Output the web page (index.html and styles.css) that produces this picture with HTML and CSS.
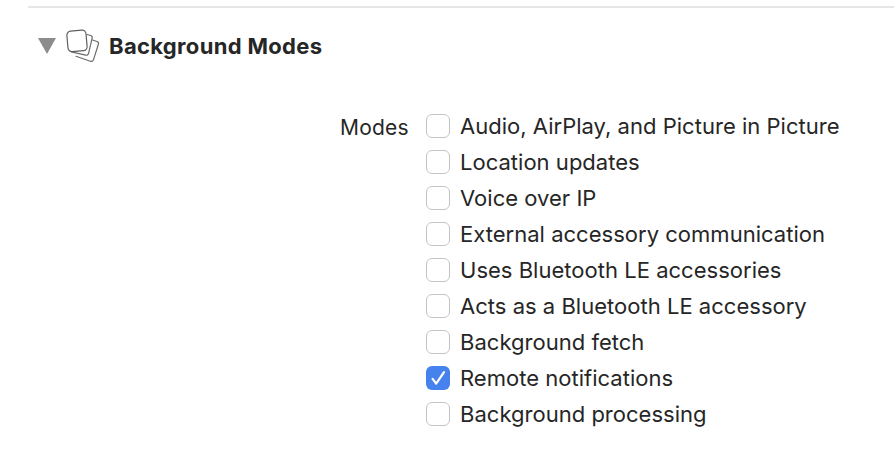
FILE: index.html
```
<!DOCTYPE html>
<html lang="en">
<head>
<meta charset="utf-8">
<title>Background Modes</title>
<link rel="stylesheet" href="styles.css">
</head>
<body>
<div class="page">
  <div class="rule"></div>
  <header class="header">
    <span class="triangle"></span>
    <svg class="icon" width="36" height="36" viewBox="0 0 36 36" fill="none" stroke="#6b6b6b" stroke-width="1.2" stroke-linecap="round">
      <path d="M22 6.5 l3.6 1 a2.2 2.2 0 0 1 1.5 2.7 L23.6 25.3 a2.5 2.5 0 0 1-3 1.9 L6.5 23.8"/>
      <path d="M27.6 12 L32 13.5 a2.2 2.2 0 0 1 1.4 2.7 L28.5 31.6 a2.5 2.5 0 0 1-3.2 1.7 L11 28.3"/>
      <rect x="2.4" y="2.6" width="19.2" height="20.6" rx="4" transform="rotate(-5 12 13)" fill="#fff" stroke="#5f5f5f"/>
    </svg>
    <h2 class="title">Background Modes</h2>
  </header>
  <section class="modes">
    <div class="label">Modes</div>
    <ul class="list">
      <li class="item"><span class="box"></span>Audio, AirPlay, and Picture in Picture</li>
      <li class="item"><span class="box"></span>Location updates</li>
      <li class="item"><span class="box"></span>Voice over IP</li>
      <li class="item"><span class="box"></span>External accessory communication</li>
      <li class="item"><span class="box"></span>Uses Bluetooth LE accessories</li>
      <li class="item"><span class="box"></span>Acts as a Bluetooth LE accessory</li>
      <li class="item"><span class="box"></span>Background fetch</li>
      <li class="item"><span class="box checked"><svg width="24" height="24" viewBox="0 0 24 24" fill="none" stroke="#fff" stroke-width="2.2" stroke-linecap="round" stroke-linejoin="round"><path d="M6.6 12.8 L10.2 17.6 L18 6.2"/></svg></span>Remote notifications</li>
      <li class="item"><span class="box"></span>Background processing</li>
    </ul>
  </section>
</div>
</body>
</html>
```
FILE: styles.css
```
* { box-sizing: border-box; }
html, body { margin: 0; padding: 0; background: #fff; }
.page {
  width: 894px;
  height: 452px;
  padding: 6px 0 0 28px;
  overflow: hidden;
  font-family: Inter, "Liberation Sans", sans-serif;
  color: #262626;
}
.rule { height: 2px; background: #e6e6e6; }
.header {
  display: flex;
  align-items: center;
  height: 36px;
  margin-top: 20px;
  padding-left: 10px;
}
.triangle {
  width: 0;
  height: 0;
  border-left: 9px solid transparent;
  border-right: 9px solid transparent;
  border-top: 16px solid #8c8c8c;
}
.icon { margin-left: 9px; }
.title {
  margin: 0 0 0 8px;
  font-size: 22px;
  line-height: 34px;
  font-weight: 700;
  letter-spacing: 0.33px;
}
.modes {
  display: flex;
  margin-top: 44px;
  padding-left: 312px;
}
.label {
  width: 86px;
  padding-top: 2px;
  font-size: 21px;
  letter-spacing: 0.2px;
  line-height: 36px;
}
.list { list-style: none; margin: 0; padding: 0; }
.item {
  display: flex;
  align-items: center;
  height: 36px;
  font-size: 22px;
  letter-spacing: 0.02px;
  white-space: nowrap;
}
.box {
  width: 24px;
  height: 24px;
  margin-right: 10px;
  border: 1.5px solid #c4c4c4;
  border-radius: 6px;
  background: #fff;
  flex: none;
}
.checked {
  border: 0;
  background: #4582ee;
}
.checked svg { display: block; }
```
